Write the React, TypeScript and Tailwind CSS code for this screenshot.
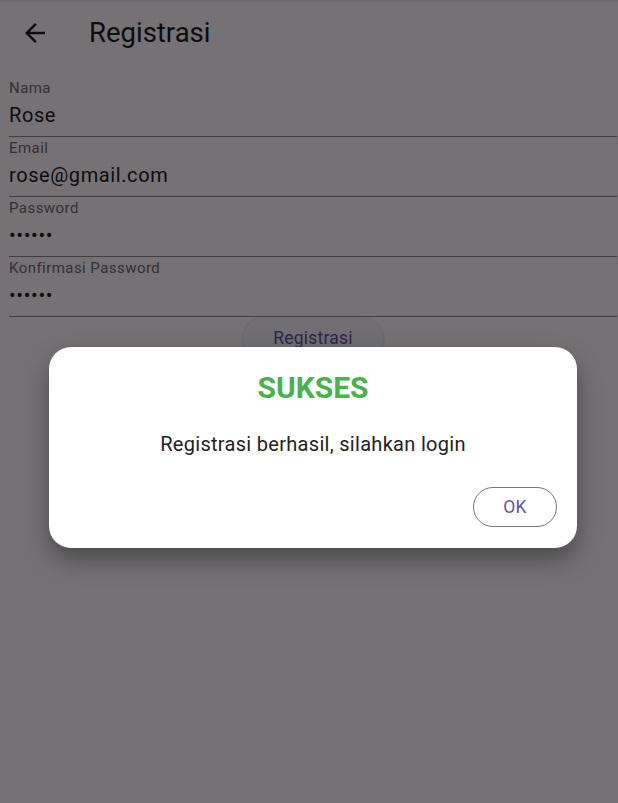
import React from "react";

const fields = [
  { label: "Nama", value: "Rose" },
  { label: "Email", value: "rose@gmail.com" },
  { label: "Password", value: "••••••" },
  { label: "Konfirmasi Password", value: "••••••" },
];

function BackIcon() {
  return (
    <svg width="30" height="30" viewBox="0 0 24 24" fill="#1d1b20">
      <path d="M20 11H7.83l5.59-5.59L12 4l-8 8 8 8 1.41-1.41L7.83 13H20v-2z" />
    </svg>
  );
}

export default function App() {
  return (
    <div
      className="relative w-[618px] h-[803px] overflow-hidden"
      style={{ fontFamily: "Roboto, 'Noto Sans', sans-serif" }}
    >
      {/* page under the dialog */}
      <div className="w-[626px] h-[803px] bg-[#fef7ff] border-t-2 border-[#ece4ec]">
        <header className="flex items-center h-[62px]">
          <div className="w-[70px] flex justify-center">
            <BackIcon />
          </div>
          <h1 className="ml-[19px] text-[27.5px] leading-[34px] text-[#1d1b20]">
            Registrasi
          </h1>
        </header>

        <div className="px-[9px] pt-[13px]">
          {fields.map((f) => (
            <div
              key={f.label}
              className="pt-[2px] pb-[9px] border-b border-[#8e8891]"
            >
              <div className="h-[18px] text-[15px] leading-[18px] tracking-[0.45px] text-[#6f6a73]">
                {f.label}
              </div>
              <div className="mt-[6px] h-[24px] text-[20px] leading-[24px] tracking-[0.6px] text-[#1d1b20]">
                {f.value}
              </div>
            </div>
          ))}

          <div className="flex justify-center">
            <button className="h-[42px] px-[30px] rounded-full bg-[#f5eff8] text-[#6750a4] text-[17.5px] tracking-[0.2px] shadow-[0_1px_3px_rgba(0,0,0,0.25)]">
              Registrasi
            </button>
          </div>
        </div>
      </div>

      {/* modal barrier */}
      <div className="absolute inset-0 bg-black/[0.54]" />

      {/* dialog */}
      <div className="absolute left-[49px] top-[347px] w-[528px] h-[201px] bg-white rounded-[22px] shadow-[0_12px_24px_rgba(0,0,0,0.35)] flex flex-col items-center">
        <h2 className="mt-[23px] text-[30px] leading-[36px] font-bold text-[#4caf50]">
          SUKSES
        </h2>
        <p className="mt-[26px] text-[20px] leading-[24px] tracking-[0.3px] text-[#232125]">
          Registrasi berhasil, silahkan login
        </p>
        <div className="self-stretch flex justify-end pr-[20px] mt-[31px]">
          <button className="h-[40px] w-[84px] rounded-full border border-[#79747e] text-[#6750a4] text-[17.5px] tracking-[0.2px]">
            OK
          </button>
        </div>
      </div>
    </div>
  );
}
